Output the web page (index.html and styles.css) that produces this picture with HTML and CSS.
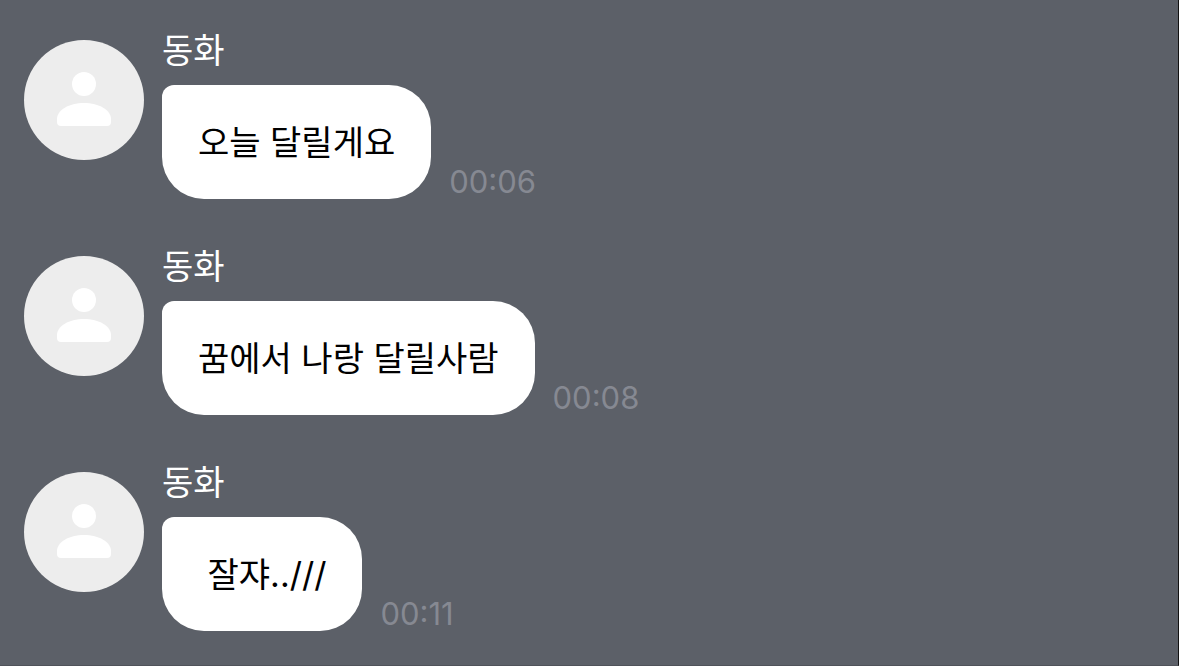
FILE: index.html
```html
<!DOCTYPE html>
<html lang="ko">
<head>
    <meta charset="UTF-8">
    <meta name="viewport" content="width=device-width, initial-scale=1.0">
    <title>채팅</title>
    <link rel="stylesheet" href="styles.css">
</head>
<body>
    <main class="chat">
        <article class="message">
            <svg class="avatar" viewBox="0 0 120 120" aria-hidden="true">
                <circle cx="60" cy="60" r="60" fill="#ededed"/>
                <circle cx="60" cy="44" r="12" fill="#ffffff"/>
                <path d="M33 82v-3c0-9 12-16 27-16s27 7 27 16v3q0 4-4 4H37q-4 0-4-4z" fill="#ffffff"/>
            </svg>
            <div class="content">
                <div class="name">동화</div>
                <div class="row">
                    <p class="bubble">오늘 달릴게요</p>
                    <time class="time">00:06</time>
                </div>
            </div>
        </article>

        <article class="message">
            <svg class="avatar" viewBox="0 0 120 120" aria-hidden="true">
                <circle cx="60" cy="60" r="60" fill="#ededed"/>
                <circle cx="60" cy="44" r="12" fill="#ffffff"/>
                <path d="M33 82v-3c0-9 12-16 27-16s27 7 27 16v3q0 4-4 4H37q-4 0-4-4z" fill="#ffffff"/>
            </svg>
            <div class="content">
                <div class="name">동화</div>
                <div class="row">
                    <p class="bubble">꿈에서 나랑 달릴사람</p>
                    <time class="time">00:08</time>
                </div>
            </div>
        </article>

        <article class="message">
            <svg class="avatar" viewBox="0 0 120 120" aria-hidden="true">
                <circle cx="60" cy="60" r="60" fill="#ededed"/>
                <circle cx="60" cy="44" r="12" fill="#ffffff"/>
                <path d="M33 82v-3c0-9 12-16 27-16s27 7 27 16v3q0 4-4 4H37q-4 0-4-4z" fill="#ffffff"/>
            </svg>
            <div class="content">
                <div class="name">동화</div>
                <div class="row">
                    <p class="bubble">&nbsp;잘쟈<span class="latin">..///</span></p>
                    <time class="time">00:11</time>
                </div>
            </div>
        </article>
    </main>
</body>
</html>
```

FILE: styles.css
```css
* {
    box-sizing: border-box;
}

body {
    margin: 0;
    background: #5c6068;
    font-family: "Noto Sans CJK KR", sans-serif;
}

.chat {
    display: flex;
    flex-direction: column;
    gap: 46px;
    min-height: 100vh;
    padding: 29px 24px 34px;
    border-right: 1px solid #111;
    border-bottom: 1px solid #50535a;
}

.message {
    display: flex;
    align-items: flex-start;
    gap: 18px;
}

.avatar {
    flex: none;
    width: 120px;
    height: 120px;
    margin-top: 11px;
}

.name {
    margin-bottom: 16px;
    color: #fff;
    font-size: 34px;
    line-height: 40px;
}

.row {
    display: flex;
    align-items: flex-end;
    gap: 18px;
}

.bubble {
    margin: 0;
    padding: 35px 36px 37px;
    background: #fff;
    border-radius: 12px 42px 42px 42px;
    color: #000;
    font-size: 34px;
    line-height: 42px;
}

.latin {
    font-family: Inter, sans-serif;
    line-height: 1;
}

.time {
    color: #868992;
    font-family: Inter, sans-serif;
    font-size: 31px;
    line-height: 34px;
}
```
